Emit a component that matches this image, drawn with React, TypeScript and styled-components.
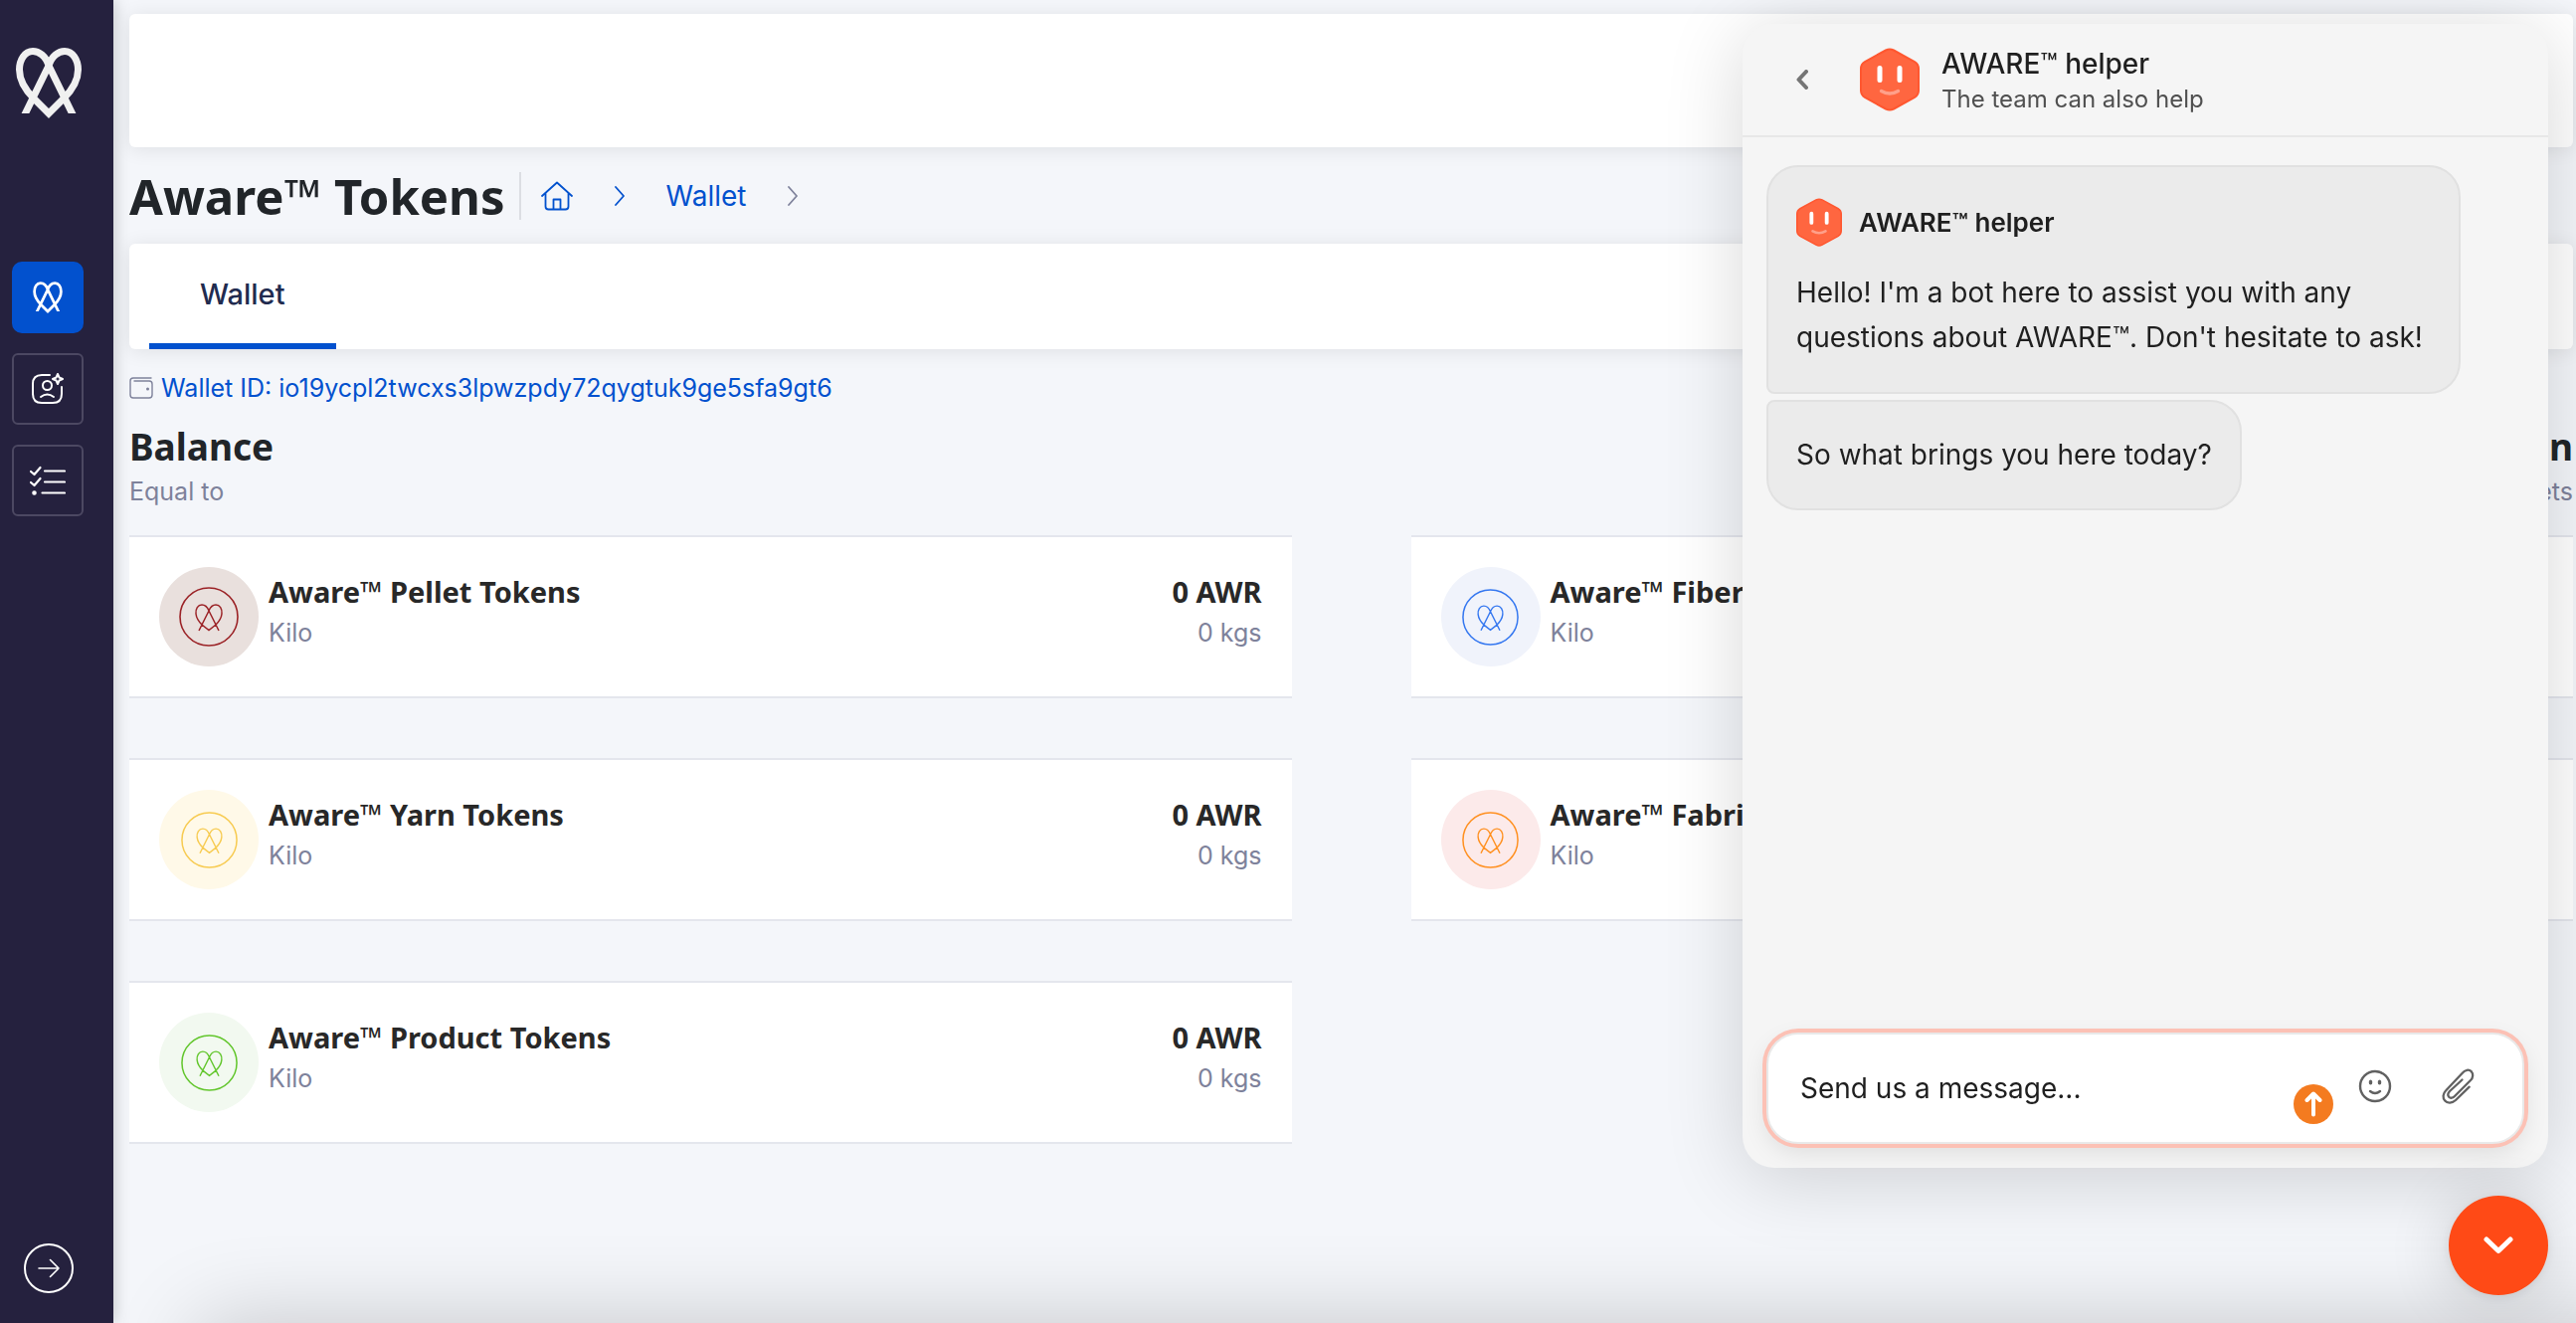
import React from "react";
import styled, { createGlobalStyle } from "styled-components";

const ui = `Inter, "Liberation Sans", sans-serif`;
const display = `"Noto Sans", "Open Sans", sans-serif`;

const GlobalStyle = createGlobalStyle`
  *, *::before, *::after { box-sizing: border-box; }
  body { margin: 0; background: #f4f6fa; font-family: ${ui}; color: #212529; overflow: hidden; }
  h1, h2, h3, p { margin: 0; }
  a { color: inherit; text-decoration: none; }
  button { font: inherit; color: inherit; border: 0; padding: 0; background: none; cursor: pointer; }
  svg { display: block; flex: none; }
`;

const Shell = styled.div`
  display: flex;
  min-height: 100vh;
`;

const Sidebar = styled.nav`
  flex: none;
  width: 114px;
  padding: 48px 0 30px 12px;
  display: flex;
  flex-direction: column;
  align-items: flex-start;
  background: #25213e;
  box-shadow: 0 0 16px rgba(0, 0, 0, 0.22);
  position: relative;
`;

const Brand = styled.a`
  margin: 0 0 144px 4px;
  && { color: #f0f0f0; }
`;

const NavList = styled.div`
  display: flex;
  flex-direction: column;
  gap: 20px;
`;

const NavButton = styled.button<{ $active?: boolean }>`
  width: 72px;
  height: 72px;
  display: grid;
  place-items: center;
  color: #fff;
  border-radius: ${(p) => (p.$active ? 10 : 6)}px;
  border: 2px solid ${(p) => (p.$active ? "#0251ce" : "#4c4862")};
  background: ${(p) => (p.$active ? "#0251ce" : "transparent")};
`;

const ExpandButton = styled.button`
  margin: auto 0 0 12px;
  width: 50px;
  height: 50px;
  display: grid;
  place-items: center;
  color: #fff;
  border: 2px solid #fff;
  border-radius: 50%;
`;

const Main = styled.main`
  flex: 1;
  min-width: 0;
  padding: 14px 3px 0 16px;
`;

const Panel = styled.div`
  background: #fff;
  border-radius: 6px;
  box-shadow: 0 2px 20px rgba(0, 0, 0, 0.09);
`;

const TopBar = styled(Panel)`
  height: 134px;
`;

const TitleRow = styled.div`
  height: 97px;
  display: flex;
  align-items: center;
`;

const PageTitle = styled.h1`
  font: 700 49px/64px ${display};
  padding-right: 14px;
`;

const Crumbs = styled.div`
  display: flex;
  align-items: center;
  height: 48px;
  padding-left: 20px;
  border-left: 2px solid #dcdee3;
  font-size: 28px;
  line-height: 36px;
  color: #0251ce;
  gap: 42px;
`;

const Tabs = styled(Panel)`
  height: 106px;
  padding-left: 20px;
  display: flex;
`;

const Tab = styled.button`
  padding: 0 51px;
  border-bottom: 6px solid #0251ce;
  font-size: 29px;
  font-weight: 500;
  color: #212b4f;
`;

const WalletLine = styled.p`
  display: flex;
  align-items: center;
  gap: 8px;
  margin-top: 23px;
  font-size: 25px;
  line-height: 32px;
  color: #0251ce;
`;

const SummaryRow = styled.div`
  display: flex;
  justify-content: space-between;
  margin: 18px 0 24px;
`;

const Summary = styled.div<{ $end?: boolean }>`
  text-align: ${(p) => (p.$end ? "right" : "left")};
`;

const SummaryTitle = styled.h2`
  font: 700 37px/50px ${display};
`;

const Muted = styled.p`
  font-size: 25px;
  line-height: 40px;
  color: #7e829b;
`;

const Grid = styled.section`
  display: grid;
  grid-template-columns: 1fr 1fr;
  gap: 60px 120px;
`;

const Card = styled.article`
  height: 164px;
  padding: 30px;
  display: flex;
  gap: 10px;
  background: #fff;
  border: solid #e4e6ed;
  border-width: 2px 0;
`;

const Disc = styled.div<{ $bg: string; $fg: string }>`
  width: 100px;
  height: 100px;
  flex: none;
  display: grid;
  place-items: center;
  border-radius: 50%;
  color: ${(p) => p.$fg};
  background: ${(p) => p.$bg};
`;

const CardText = styled.div<{ $end?: boolean }>`
  padding-top: 4px;
  ${(p) => p.$end && "margin-left: auto; text-align: right;"}
`;

const CardTitle = styled.h3`
  font: 700 29px/42px ${display};
  color: #282828;
`;

const BottomGlow = styled.div`
  position: fixed;
  left: 200px;
  right: -80px;
  bottom: -200px;
  height: 200px;
  box-shadow: 0 0 90px rgba(0, 0, 0, 0.2);
  pointer-events: none;
`;

const Chat = styled.section`
  position: fixed;
  top: 24px;
  right: 28px;
  bottom: 156px;
  width: 810px;
  display: flex;
  flex-direction: column;
  background: #f5f5f5;
  border-radius: 32px;
  box-shadow: 0 10px 80px rgba(0, 0, 0, 0.16);
  color: #1f1f1f;
`;

const ChatHeader = styled.header`
  height: 114px;
  padding: 0 54px;
  display: flex;
  align-items: center;
  border-bottom: 2px solid #e7e7e7;
`;

const BackButton = styled.button`
  width: 64px;
  color: #757575;
`;

const ChatTitles = styled.div`
  padding: 3px 0 0 22px;
`;

const ChatTitle = styled.h2`
  font: 500 28px/36px ${ui};
`;

const ChatSub = styled.p`
  font-size: 24px;
  line-height: 36px;
  color: #505050;
`;

const Messages = styled.div`
  flex: 1;
  padding: 28px 24px;
  display: flex;
  flex-direction: column;
  align-items: flex-start;
  gap: 6px;
`;

const Bubble = styled.div<{ $last?: boolean }>`
  max-width: 698px;
  padding: ${(p) => (p.$last ? 31 : 32)}px 28px;
  background: #ebebeb;
  border: 2px solid #e1e1e1;
  border-radius: ${(p) => (p.$last ? "8px 32px 32px 32px" : "32px 32px 32px 8px")};
  font-size: 28px;
  line-height: 45px;
`;

const Author = styled.div`
  display: flex;
  align-items: center;
  gap: 17px;
  height: 48px;
  margin-bottom: 24px;
  font-size: 26px;
  line-height: 44px;
  font-weight: 600;
`;

const Composer = styled.form`
  margin: 0 24px 24px;
  height: 112px;
  padding: 0 48px 0 32px;
  display: flex;
  align-items: center;
  background: #fff;
  border: 2px solid #e9e9e9;
  border-radius: 32px;
  box-shadow: 0 0 0 4px #fcc1b5, 0 8px 24px rgba(0, 0, 0, 0.1);
`;

const MessageInput = styled.input`
  flex: 1;
  min-width: 0;
  border: 0;
  outline: 0;
  padding: 0;
  background: transparent;
  font: 400 28px/40px ${ui};
  color: #1f1f1f;
  &::placeholder { color: #1f1f1f; opacity: 1; }
`;

const SendBadge = styled.button`
  width: 40px;
  height: 40px;
  margin: 32px 25px 0 0;
  display: grid;
  place-items: center;
  border-radius: 50%;
  color: #fff;
  background: #f47b20;
`;

const ToolButton = styled.button`
  margin-bottom: 4px;
  color: #616161;
  & + & { margin-left: 50px; }
`;

const Launcher = styled.button`
  position: fixed;
  right: 28px;
  bottom: 28px;
  width: 100px;
  height: 100px;
  display: grid;
  place-items: center;
  border-radius: 50%;
  color: #fff;
  background: #ff4a16;
  box-shadow: 0 2px 12px rgba(0, 0, 0, 0.08), 0 4px 64px rgba(0, 0, 0, 0.16);
`;

function Knot({ size, stroke }: { size: number; stroke: number }) {
  return (
    <svg width={size} height={(size * 71) / 66} viewBox="0 0 66 71" fill="none" stroke="currentColor" strokeWidth={stroke} strokeLinejoin="miter">
      <defs>
        <clipPath id="knot-feet">
          <path d="M0 0 H66 V66 H46 L33 82 L20 66 H0 Z" />
        </clipPath>
      </defs>
      <path
        clipPath="url(#knot-feet)"
        d="M7 71 L33 18 C36 8 43 3.500 49 3.500 C57 3.500 62.500 12 62.500 22 C62.500 34 55 44 48 51 L33 66 L18 51 C11 44 3.500 34 3.500 22 C3.500 12 9 3.500 17 3.500 C23 3.500 30 8 33 18 L59 71"
      />
    </svg>
  );
}

function TokenMark({ size }: { size: number }) {
  return (
    <svg width={size} height={size} viewBox="0 0 60 60" fill="none" stroke="currentColor">
      <circle cx="30" cy="30" r="29" strokeWidth="1.600" />
      <path strokeWidth="1.500" d="M20 44 L30 24 C32 19 34 18 37 18 C41 18 43.500 22 43 27 C42.500 32 40 35 37 38 L30 43.500 L23 38 C20 35 17.500 32 17 27 C16.500 22 19 18 23 18 C26 18 28 19 30 24 L40 44" />
    </svg>
  );
}

function BotFace({ size }: { size: number }) {
  return (
    <svg width={size} height={(size * 64) / 60} viewBox="0 0 60 64" fill="none">
      <path d="M26 2.500 Q30 0.500 34 2.500 L55 14 Q59 16.500 59 21 V43 Q59 47.500 55 50 L34 61.500 Q30 63.500 26 61.500 L5 50 Q1 47.500 1 43 V21 Q1 16.500 5 14 Z" fill="#ff6640" stroke="#ff5730" strokeWidth="2" />
      <path d="M20 20.500 V32.500 M40 20.500 V32.500" stroke="#fff" strokeWidth="5" strokeLinecap="round" />
      <path d="M21.500 43.500 Q30 48.500 38.500 43.500" stroke="#ffa08a" strokeWidth="3.400" strokeLinecap="round" />
    </svg>
  );
}

function Chevron({ color }: { color: string }) {
  return (
    <svg width="10" height="20" viewBox="0 0 10 20" fill="none" stroke={color} strokeWidth="1.800" strokeLinecap="round" strokeLinejoin="round">
      <path d="M1 1 L9 10 L1 19" />
    </svg>
  );
}

type Token = { name: string; bg: string; fg: string; mark: number };

const tokens: Token[] = [
  { name: "Pellet", bg: "#e9e0dd", fg: "#9b2226", mark: 60 },
  { name: "Fiber", bg: "#f0f3fb", fg: "#3477f0", mark: 57 },
  { name: "Yarn", bg: "#fff9e8", fg: "#f7cb51", mark: 57 },
  { name: "Fabric", bg: "#fceaea", fg: "#ff9020", mark: 57 },
  { name: "Product", bg: "#f2f9f0", fg: "#62c62c", mark: 57 },
];

export default function App() {
  return (
    <>
      <GlobalStyle />
      <Shell>
        <Sidebar aria-label="Main">
          <Brand href="#" aria-label="Aware">
            <Knot size={66} stroke={7} />
          </Brand>
          <NavList>
            <NavButton $active aria-label="Tokens">
              <Knot size={30} stroke={6} />
            </NavButton>
            <NavButton aria-label="Profile">
              <svg width="32" height="32" viewBox="0 0 32 32" fill="none" stroke="currentColor" strokeWidth="2" strokeLinecap="round" strokeLinejoin="round">
                <path d="M18 2 H10 Q1 2 1 11 V21 Q1 30 10 30 H21 Q30 30 30 21 V14" />
                <circle cx="15.500" cy="12.500" r="4.500" />
                <path d="M9 24 Q15.500 19 22 24" />
                <path d="M26 1 L27.500 4.500 L31 6 L27.500 7.500 L26 11 L24.500 7.500 L21 6 L24.500 4.500 Z" />
              </svg>
            </NavButton>
            <NavButton aria-label="Checklist">
              <svg width="36" height="30" viewBox="0 0 36 30" fill="none" stroke="currentColor" strokeWidth="2.200" strokeLinecap="round" strokeLinejoin="round">
                <path d="M1 6 L4.500 9 L10.500 2 M1 17 L4.500 20 L10.500 13 M15 5.500 H35 M15 16.500 H35 M12.500 27.500 H35" />
                <circle cx="4.500" cy="27.500" r="1.200" fill="currentColor" />
              </svg>
            </NavButton>
          </NavList>
          <ExpandButton aria-label="Expand menu">
            <svg width="22" height="20" viewBox="0 0 22 20" fill="none" stroke="currentColor" strokeWidth="1.600" strokeLinecap="round" strokeLinejoin="round">
              <path d="M1 10 H21 M12.500 1.500 L21 10 L12.500 18.500" />
            </svg>
          </ExpandButton>
        </Sidebar>

        <Main>
          <TopBar />
          <TitleRow>
            <PageTitle>Aware™ Tokens</PageTitle>
            <Crumbs>
              <a href="#" aria-label="Home">
                <svg width="32" height="30" viewBox="0 0 32 30" fill="none" stroke="#0251ce" strokeWidth="1.800" strokeLinecap="round" strokeLinejoin="round">
                  <path d="M1 15 L16 1.500 L31 15 M4.500 12 V25.500 Q4.500 28.500 7.500 28.500 H24.500 Q27.500 28.500 27.500 25.500 V12 M12.500 28 V18.500 H19.500 V28" />
                </svg>
              </a>
              <Chevron color="#0251ce" />
              <a href="#">Wallet</a>
              <Chevron color="#7e829b" />
            </Crumbs>
          </TitleRow>
          <Tabs>
            <Tab>Wallet</Tab>
          </Tabs>
          <WalletLine>
            <svg width="24" height="22" viewBox="0 0 24 22" fill="none" stroke="#7e829b" strokeWidth="1.400" strokeLinecap="round">
              <path d="M22 1 H4 Q1 1 1 4 V18 Q1 21 4 21 H20 Q23 21 23 18 V7 Q23 4 20 4 H5" />
              <circle cx="18.500" cy="12" r="0.800" fill="#7e829b" />
            </svg>
            <a href="#">Wallet ID: io19ycpl2twcxs3lpwzpdy72qygtuk9ge5sfa9gt6</a>
          </WalletLine>
          <SummaryRow>
            <Summary>
              <SummaryTitle>Balance</SummaryTitle>
              <Muted>Equal to</Muted>
            </Summary>
            <Summary $end>
              <SummaryTitle>Token</SummaryTitle>
              <Muted>Assets</Muted>
            </Summary>
          </SummaryRow>
          <Grid>
            {tokens.map((t) => (
              <Card key={t.name}>
                <Disc $bg={t.bg} $fg={t.fg}>
                  <TokenMark size={t.mark} />
                </Disc>
                <CardText>
                  <CardTitle>Aware™ {t.name} Tokens</CardTitle>
                  <Muted>Kilo</Muted>
                </CardText>
                <CardText $end>
                  <CardTitle>0 AWR</CardTitle>
                  <Muted>0 kgs</Muted>
                </CardText>
              </Card>
            ))}
          </Grid>
        </Main>
      </Shell>
      <BottomGlow />

      <Chat aria-label="Chat">
        <ChatHeader>
          <BackButton aria-label="Back">
            <svg width="12" height="20" viewBox="0 0 12 20" fill="none" stroke="currentColor" strokeWidth="4" strokeLinecap="round" strokeLinejoin="round">
              <path d="M10 2 L2.500 10 L10 18" />
            </svg>
          </BackButton>
          <BotFace size={60} />
          <ChatTitles>
            <ChatTitle>AWARE™ helper</ChatTitle>
            <ChatSub>The team can also help</ChatSub>
          </ChatTitles>
        </ChatHeader>
        <Messages>
          <Bubble>
            <Author>
              <BotFace size={46} />
              AWARE™ helper
            </Author>
            <p>Hello! I'm a bot here to assist you with any questions about AWARE™. Don't hesitate to ask!</p>
          </Bubble>
          <Bubble $last>
            <p>So what brings you here today?</p>
          </Bubble>
        </Messages>
        <Composer onSubmit={(e) => e.preventDefault()}>
          <MessageInput aria-label="Message" placeholder="Send us a message..." />
          <SendBadge aria-label="Send">
            <svg width="18" height="26" viewBox="0 0 18 26" fill="none" stroke="currentColor" strokeWidth="4" strokeLinecap="round" strokeLinejoin="round">
              <path d="M9 23.500 V3 M2.500 9 L9 2.500 L15.500 9" />
            </svg>
          </SendBadge>
          <ToolButton type="button" aria-label="Emoji">
            <svg width="34" height="34" viewBox="0 0 34 34" fill="none" stroke="currentColor" strokeWidth="2.400" strokeLinecap="round">
              <circle cx="17" cy="17" r="15" />
              <path d="M12 22 Q17 26 22 22" />
              <ellipse cx="12.500" cy="13" rx="0.600" ry="1.300" fill="currentColor" />
              <ellipse cx="21.500" cy="13" rx="0.600" ry="1.300" fill="currentColor" />
            </svg>
          </ToolButton>
          <ToolButton type="button" aria-label="Attach">
            <svg width="33" height="36" viewBox="0 0 33 36" fill="none" stroke="currentColor" strokeWidth="2.300" strokeLinecap="round" strokeLinejoin="round">
              <path d="M27.700 18.700 L14 32 C10.500 35.300 5.500 35.300 3.200 32.500 C0.800 30 1 25.500 4 22.500 L20.500 5 C23.500 1 27.500 1 29.800 3.200 C32 5.500 31.500 9.500 29 12 L13 28 C11 30 8.700 30.300 7.200 28.700 C5.700 27 6.200 25 8 23 L20.500 11.500" />
            </svg>
          </ToolButton>
        </Composer>
      </Chat>
      <Launcher aria-label="Close chat">
        <svg width="30" height="18" viewBox="0 0 30 18" fill="none" stroke="currentColor" strokeWidth="5" strokeLinecap="round" strokeLinejoin="round">
          <path d="M3 3 L15 14.500 L27 3" />
        </svg>
      </Launcher>
    </>
  );
}
